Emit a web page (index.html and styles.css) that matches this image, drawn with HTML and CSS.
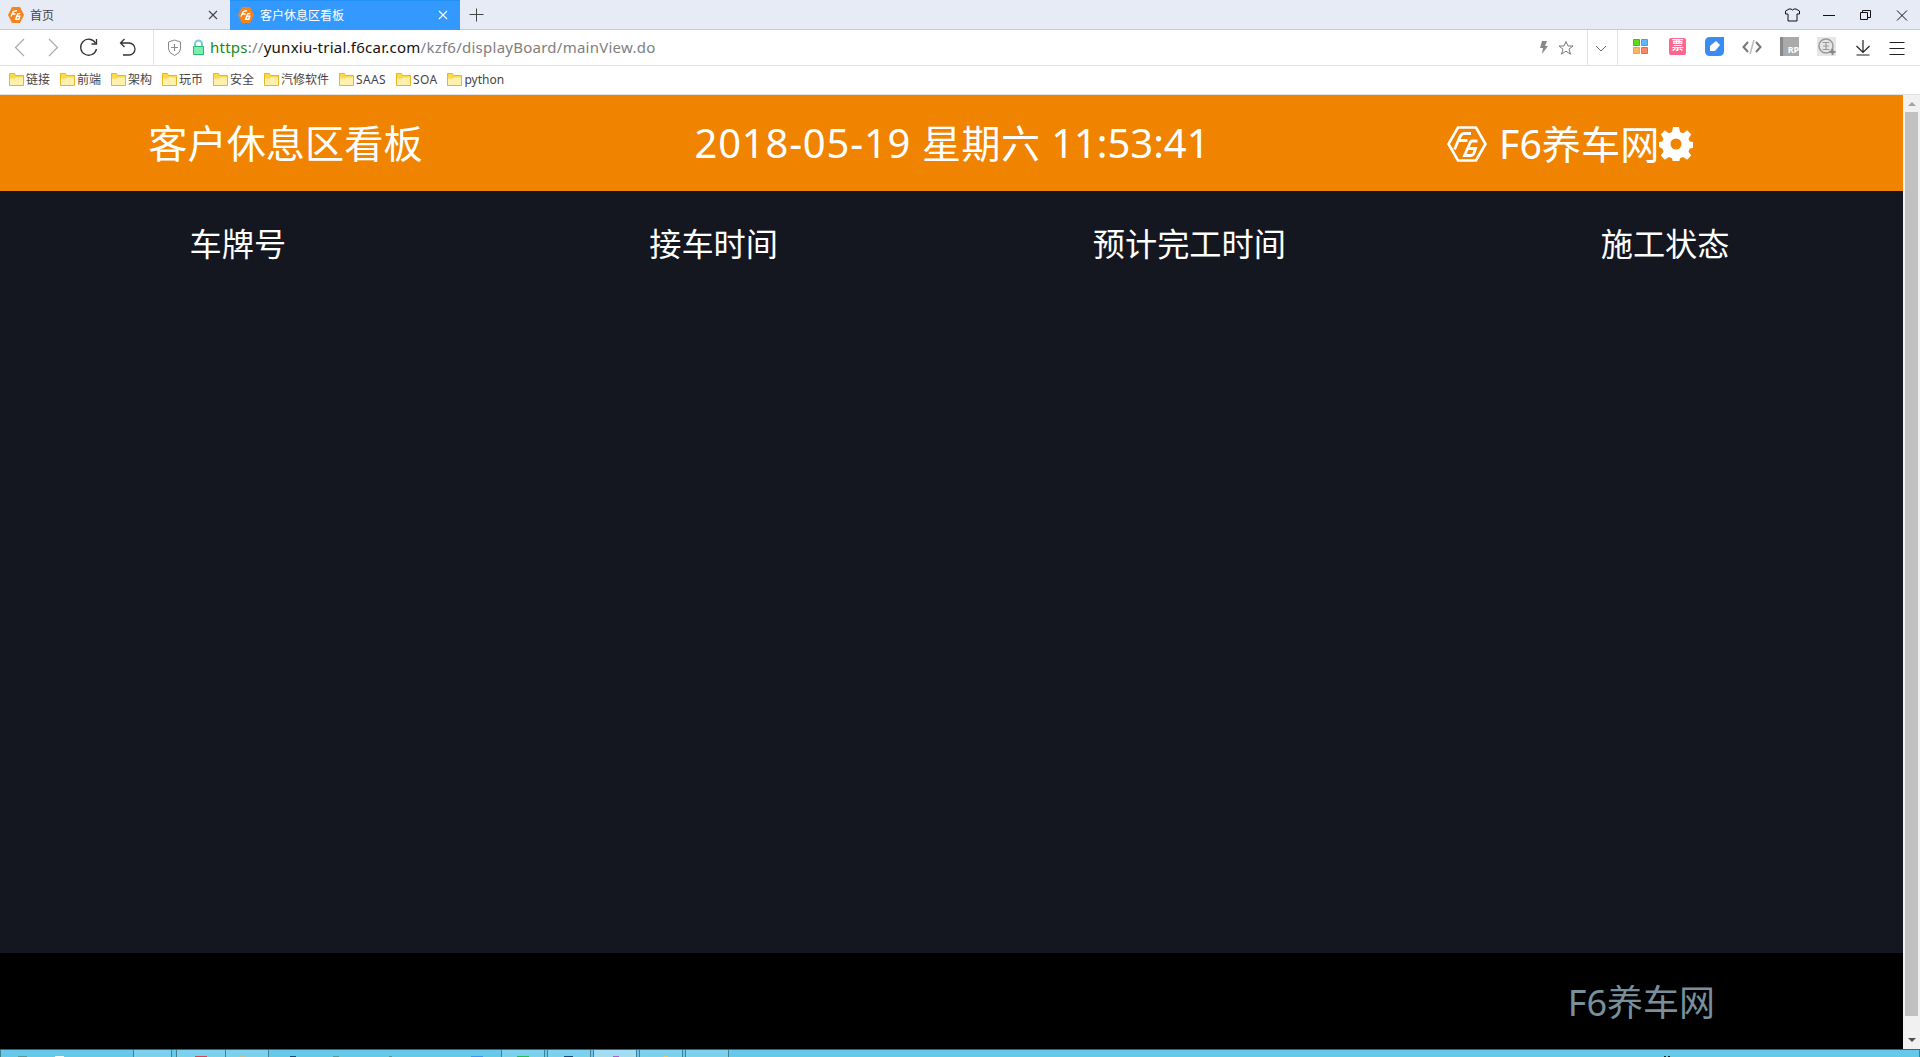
FILE: index.html
```html
<!DOCTYPE html>
<html lang="zh-CN">
<head>
<meta charset="utf-8">
<title>客户休息区看板</title>
<link rel="stylesheet" href="styles.css">
</head>
<body>
<svg class="defs" width="0" height="0">
  <symbol id="folder" viewBox="0 0 15 13">
    <path d="M.5 12.5V.5h5l1 2h8v10z" fill="#fcd94b" stroke="#efb31f"/>
    <path d="M1 5.5h5l1-1h7V12H1z" fill="#fff0ae"/>
  </symbol>
  <symbol id="badge" viewBox="0 0 16 16">
    <path d="M4 0h8l4 8-4 8H4L0 8z" fill="#f5841f"/>
    <path d="M3 9.5L5.3 4.6 9 3.6M4.600 7h3M12.200 6.400L9.600 7 7.600 12.300h3.200l1-3H9" fill="none" stroke="#fff" stroke-width="1.400"/>
  </symbol>
</svg>

<header class="browser">
  <div class="tabs">
    <div class="tab tab-home">
      <svg class="badge"><use href="#badge"/></svg><span>首页</span>
      <svg class="close" viewBox="0 0 10 10"><path d="M1 1l8 8M9 1L1 9"/></svg>
    </div>
    <div class="tab tab-active">
      <svg class="badge"><use href="#badge"/></svg><span>客户休息区看板</span>
      <svg class="close" viewBox="0 0 10 10"><path d="M1 1l8 8M9 1L1 9"/></svg>
    </div>
    <svg class="new-tab" viewBox="0 0 14 14"><path d="M7.500 .5v13M.5 6.500h14"/></svg>
    <svg class="window-controls" viewBox="0 0 126 16" width="126" height="16">
      <path d="M5 2L1.500 4v3H4v7h9V7h2.500V4L12 2h-2Q8.500 4 7 2z"/>
      <path d="M39 8.500h12M76.500 5.500h7v7h-7zM78.500 5.500v-2h8v7h-3M113 3.500l10 10M123 3.500l-10 10"/>
    </svg>
  </div>

  <div class="toolbar">
    <svg class="nav" viewBox="0 0 140 35" width="140" height="35">
      <g fill="none" stroke="#aaa" stroke-width="1.200"><path d="M10 9l-8.500 8.500L10 26M35 9l8.500 8.500L35 26"/></g>
      <g fill="none" stroke="#333" stroke-width="1.300"><path d="M81.500 13A8 8 0 1 0 82.500 19M82.500 9v5h-5M110.500 9l-4 4 4 4M107 13h8a6 6 0 0 1 0 12h-6"/></g>
    </svg>
    <div class="address">
      <svg class="address-icons" viewBox="0 0 40 20" width="40" height="20">
        <path d="M7.500 2l6 2v7q0 4-6 6.500Q1.500 15 1.500 11V4zM4 9.500h7M7.500 6v7" fill="none" stroke="#888"/>
        <path d="M28 9V6a3.500 3.500 0 0 1 7 0v3" fill="none" stroke="#82c7e0" stroke-width="2"/>
        <path d="M26.500 8.500h10v8h-10z" fill="#7eedb0" stroke="#20bf6b"/>
      </svg>
      <div class="url"><span class="secure">https</span>://<span class="host">yunxiu-trial.f6car.com</span>/kzf6/displayBoard/mainView.do</div>
      <svg class="address-actions" viewBox="0 0 36 16" width="36" height="16">
        <path d="M4 1h5L7 6h3L4 14l1-6H2z" fill="#888"/>
        <path d="M28 1.500l2 4.500h5l-4 3.200 1.500 5L28 11.200l-4.500 3 1.500-5L21 6h5z" fill="none" stroke="#777"/>
      </svg>
    </div>
    <svg class="expand" viewBox="0 0 12 8" width="12" height="8"><path d="M1 1l5 5 5-5" fill="none" stroke="#666"/></svg>
    <div class="extensions">
      <svg viewBox="0 0 16 16"><path d="M.5.500h6v6h-6z" fill="#62d91b" stroke="#45bc05"/><path d="M8.500.500h6v6h-6z" fill="#5db9f8" stroke="#3ba3ec"/><path d="M.5 8.500h6v6h-6z" fill="#ffb45e" stroke="#f6a040"/><path d="M8.500 8.500h6v6h-6z" fill="#ff8569" stroke="#f16a50"/></svg>
      <span class="ticket">票</span>
      <svg viewBox="0 0 19 19"><path d="M5 0h14v14q0 5-5 5H5q-5 0-5-5V5q0-5 5-5z" fill="#398df2"/><path d="M5 14V9l6-5 4 4-5 6z" fill="#fff"/></svg>
      <svg viewBox="0 0 20 16"><path d="M6 3L1.500 8 6 13M14 3l4.500 5L14 13" fill="none" stroke="#777" stroke-width="2"/><path d="M12 1L8 15" stroke="#bbb" stroke-width="1.500"/></svg>
      <span class="rp">RP</span>
      <svg viewBox="0 0 19 19"><path d="M0 0h19v19H0z" fill="#e6e6e6"/><circle cx="9" cy="9" r="7" fill="none" stroke="#999" stroke-width="1.500"/><path d="M5.500 5.500h7M9 6v6M5.500 12.500h7M6 9h6" stroke="#999" stroke-width="1.200"/><path d="M15.500 12v6M12.500 15h6" stroke="#888" stroke-width="2"/></svg>
      <svg viewBox="0 0 16 16"><path d="M8 0v12M1.500 6L8 12.500 14.500 6M1.500 15h13" fill="none" stroke="#222" stroke-width="1.200"/></svg>
      <svg viewBox="0 0 16 16"><path d="M.5 2.500h15M.5 8.500h15M.5 14.500h15" stroke="#222" stroke-width="1.200"/></svg>
    </div>
  </div>

  <nav class="bookmarks">
    <a><svg><use href="#folder"/></svg>链接</a>
    <a><svg><use href="#folder"/></svg>前端</a>
    <a><svg><use href="#folder"/></svg>架构</a>
    <a><svg><use href="#folder"/></svg>玩币</a>
    <a><svg><use href="#folder"/></svg>安全</a>
    <a><svg><use href="#folder"/></svg>汽修软件</a>
    <a class="latin"><svg><use href="#folder"/></svg>SAAS</a>
    <a class="latin"><svg><use href="#folder"/></svg>SOA</a>
    <a><svg><use href="#folder"/></svg>python</a>
  </nav>
</header>

<div class="viewport">
  <main class="board">
    <div class="board-header">
      <h1>客户休息区看板</h1>
      <div class="clock"><span class="date">2018-05-19</span> <span class="weekday">星期六</span> <span class="time">11:53:41</span></div>
      <div class="brand">
        <svg class="logo" viewBox="0 0 40 36" width="40" height="36">
          <path d="M11 1.500h18L38.500 18 29 34.500H11L1.500 18z" fill="none" stroke="#fff" stroke-width="2.600"/>
          <path d="M7.500 23.500L11.500 14Q14 7.500 17 7.500h7M11.500 14.500h9M30.500 15h-5q-2 0-3 3L17.500 29.500h6q2.500 0 3.500-2.500l1.500-4.500h-8" fill="none" stroke="#fff" stroke-width="2.800"/>
        </svg>
        <span class="brand-name">F6养车网</span>
        <svg class="gear" viewBox="0 0 34 34" width="34" height="34">
          <path fill="#fff" fill-rule="evenodd" d="M14 0h6l1 5 3 1.300 4.200-3 4 4.200-2.700 4.200 1.200 2.800 3.300.5v6l-3.300.5-1.200 3 2.700 4-4 4.200-4.200-2.700-3 1.200-1 4.300h-6l-1-4.300-3-1.200-4.200 2.700-4-4.200 2.700-4-1.200-3L0 20v-5l3.300-.5 1.200-2.800L1.800 7.500l4-4.200 4.200 3L13 5zM17 11.500a5.500 5.500 0 1 0 0 11 5.500 5.500 0 1 0 0-11z"/>
        </svg>
      </div>
    </div>
    <div class="columns">
      <span>车牌号</span><span>接车时间</span><span>预计完工时间</span><span>施工状态</span>
    </div>
    <footer class="board-footer">F6养车网</footer>
  </main>
  <div class="scrollbar">
    <i class="arrow-up"></i><div class="thumb"></div><i class="arrow-down"></i>
  </div>
</div>

<svg class="taskbar" viewBox="0 0 1920 8" width="1920" height="8">
  <path d="M0 0h1920v8H0z" fill="#67c9ea"/>
  <path d="M133 0h39v8h-39zM177 0h48v8h-48zM225 0h43v8h-43zM501 0h44v8h-44zM547 0h44v8h-44zM639 0h44v8h-44zM685 0h43v8h-43z" fill="#7bd1ee"/>
  <path d="M594 0h42v8h-42z" fill="#a3ddf3"/>
  <path d="M.5 1v7M133.500 1v7M171.500 1v7M176.500 1v7M225.500 1v7M268.500 1v7M501.500 1v7M544.500 1v7M547.500 1v7M590.500 1v7M593.500 1v7M636.500 1v7M639.500 1v7M682.500 1v7M685.500 1v7M728.500 1v7M1919.500 1v7" stroke="#417f94"/>
  <path d="M0 .5h1920" stroke="#4d5a60"/>
  <path d="M55 7h9v1h-9z" fill="#fff"/><path d="M195 7h12v1h-12z" fill="#e23c57"/><path d="M240 7h5v1h-5z" fill="#c8bd91"/>
  <path d="M290 7h6v1h-6zM564 7h9v1h-9z" fill="#17477f"/><path d="M471 7h12v1h-12z" fill="#3b97f2"/><path d="M517 7h12v1h-12z" fill="#20bd58"/>
  <path d="M613 7h6v1h-6z" fill="#b15ad4"/><path d="M664 7h4v1h-4z" fill="#f3c45c"/><path d="M389 7h3v1h-3zM18 7h9v1h-9zM333 7h6v1h-6z" fill="#5896a0"/>
  <path d="M1664 7h2v1h-2zM1668 7h2v1h-2z" fill="#222"/>
</svg>
</body>
</html>
```
FILE: styles.css
```css
* { box-sizing: border-box; }
body {
  margin: 0;
  height: 1057px;
  overflow: hidden;
  display: flex;
  flex-direction: column;
  font-family: "Noto Sans", "Noto Sans CJK SC", sans-serif;
  background: #fff;
}
.defs { position: absolute; }
svg { flex: none; display: block; }

.browser { height: 95px; flex: none; border-bottom: 1px solid #e1e1e1; }
.tabs {
  height: 30px;
  display: flex;
  align-items: center;
  background: #e7ebf5;
  border-bottom: 1px solid #c5cddc;
}
.tab {
  width: 230px;
  height: 30px;
  padding: 0 12px 0 8px;
  display: flex;
  align-items: center;
  gap: 6px;
  font-size: 12px;
  color: #444;
}
.tab-active { background: #3399ff; color: #fff; border-top: 1px solid #2390f8; }
.badge { width: 16px; height: 16px; }
.close { width: 10px; height: 10px; margin-left: auto; stroke: currentColor; stroke-width: 1.1; }
.new-tab { width: 14px; height: 14px; margin-left: 9px; stroke: #444; overflow: visible; }
.window-controls { margin: 0 10px 0 auto; fill: none; stroke: #111; }

.toolbar { height: 36px; display: flex; align-items: center; border-bottom: 1px solid #e3e3e3; }
.nav { margin-left: 14px; margin-right: -1px; }
.address {
  width: 1435px;
  height: 35px;
  display: flex;
  align-items: center;
  border-left: 1px solid #e1e1e1;
  border-right: 1px solid #e1e1e1;
  padding: 0 13px 0 13px;
}
.url { font-size: 15px; letter-spacing: .25px; color: #808080; margin-left: 3px; padding-bottom: 2px; white-space: nowrap; }
.secure { color: #168b16; }
.host { color: #111; }
.address-actions { margin-left: auto; }
.expand { margin: 2px 10px 0 7px; }
.extensions {
  flex: 1;
  height: 35px;
  display: flex;
  align-items: center;
  justify-content: space-between;
  padding: 0 15px 2px 15px;
  border-left: 1px solid #e1e1e1;
}
.extensions svg { width: 16px; height: 16px; overflow: visible; }
.extensions svg:nth-child(3), .extensions svg:nth-child(6) { width: 19px; height: 19px; }
.extensions svg:nth-child(4) { width: 20px; }
.extensions svg:nth-child(n+7) { margin-top: 3px; }
.extensions .ticket { margin-left: 2px; }
.ticket {
  width: 17px; height: 17px;
  font-size: 12px; line-height: 16px; text-align: center; font-weight: 700;
  color: #fff; background: #ff668e; border-radius: 2px;
}
.rp {
  width: 19px; height: 19px;
  font-size: 9px; line-height: 26px; text-align: right; font-weight: 700;
  color: #fff; background: #aaa; border-left: 3px solid #888;
}

.bookmarks { height: 28px; display: flex; align-items: center; gap: 10px; padding: 0 0 1px 9px; }
.bookmarks a { display: flex; align-items: center; gap: 2px; font-size: 12px; line-height: 17px; color: #444; white-space: nowrap; }
.bookmarks .latin { letter-spacing: .35px; }
.bookmarks svg { width: 15px; height: 13px; }

.viewport { height: 954px; flex: none; display: flex; }
.board { width: 1903px; display: flex; flex-direction: column; background: #14171f; color: #fff; }
.board-header { height: 96px; display: flex; align-items: center; background: #f08300; }
.board-header h1 { width: 30%; margin: 0; text-align: center; font-size: 39.2px; font-weight: 400; line-height: 56px; }
.clock { width: 40%; padding-left: 1px; text-align: center; font-size: 40px; letter-spacing: .42px; line-height: 56px; white-space: nowrap; }
.date { letter-spacing: .8px; }
.weekday { font-size: 39px; }
.time { letter-spacing: -.05px; }
.brand { width: 30%; padding: 1px 0 0 115px; display: flex; align-items: center; font-size: 39.2px; line-height: 56px; }
.logo, .gear { margin-top: 1px; }
.brand-name { margin-left: 12px; white-space: nowrap; }
.columns { flex: 1; display: grid; grid-template-columns: repeat(4, 1fr); align-items: start; padding-top: 29px; text-align: center; font-size: 32.2px; line-height: 48px; }
.board-footer { height: 96px; padding: 2px 188px 0 0; background: #000; color: #78909c; text-align: right; font-size: 36px; line-height: 96px; }

.scrollbar { width: 17px; display: flex; flex-direction: column; align-items: center; background: #f1f1f1; }
.thumb { width: 13px; height: 904px; margin-top: 6px; background: #c1c1c1; }
.arrow-up { margin-top: 7px; border: 4px solid transparent; border-top: 0; border-bottom-color: #a3a3a3; }
.arrow-down { margin-top: 22px; border: 4px solid transparent; border-bottom: 0; border-top-color: #505050; }
```
